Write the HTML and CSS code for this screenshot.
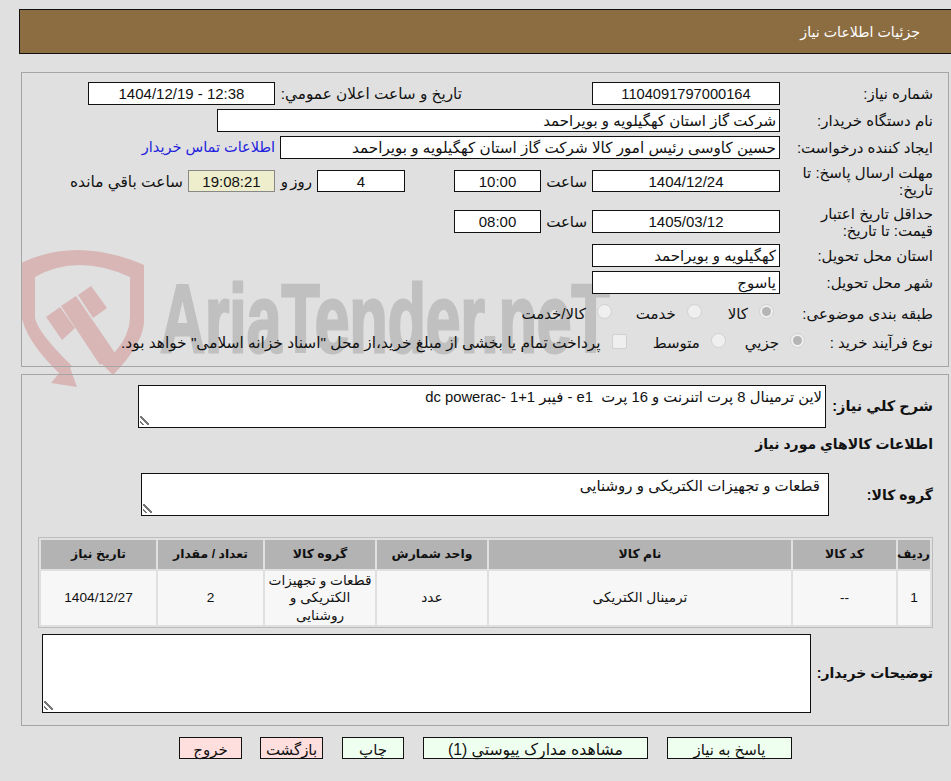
FILE: index.html
```html
<!DOCTYPE html>
<html lang="fa" dir="rtl">
<head>
<meta charset="utf-8">
<title>جزئیات اطلاعات نیاز</title>
<link rel="stylesheet" href="styles.css">
</head>
<body>
<header class="page-title">جزئیات اطلاعات نیاز</header>

<svg class="wm-shield" viewBox="0 240 160 160" aria-hidden="true">
  <path class="wm-f" d="M21 263 Q77 236 144 265 V323 Q142 345 113 375 L100 362 L115 352 Q130 335 130 317 V277 Q77 253 35 277 V318 Q38 333 72 366 L62 376 Q24 340 21 313 Z"/>
  <path class="wm-f" d="M51 383 L68 362 L77 387 Z"/>
  <path class="wm-f" d="M46 317 L60 307 L75 328 L62 340 Z"/>
  <path class="wm-f" d="M61 306 L76 296 L115 353 L100 365 Z"/>
  <path class="wm-f" d="M78 295 L91 286 L107 308 L93 318 Z"/>
</svg>
<div class="wm-text" aria-hidden="true">AriaTender.neT</div>

<main>
<section class="panel top-panel">
  <div class="row r1">
    <label class="lbl">شماره نیاز:</label>
    <output class="box c w188 id">1104091797000164</output>
    <label class="lbl2">تاریخ و ساعت اعلان عمومي:</label>
    <output class="box c w187" dir="ltr">1404/12/19 - 12:38</output>
  </div>
  <div class="row r1">
    <label class="lbl">نام دستگاه خریدار:</label>
    <output class="box w563">شرکت گاز استان کهگیلویه و بویراحمد</output>
  </div>
  <div class="row r1">
    <label class="lbl">ایجاد کننده درخواست:</label>
    <output class="box w500">حسین کاوسی رئیس امور کالا شرکت گاز استان کهگیلویه و بویراحمد</output>
    <a class="contact" href="#">اطلاعات تماس خریدار</a>
  </div>
  <div class="row r2">
    <label class="lbl tall">مهلت ارسال پاسخ: تا تاریخ:</label>
    <output class="box c w188 h22">1404/12/24</output>
    <span class="sa">ساعت</span>
    <output class="box c w87 h22">10:00</output>
    <output class="box c w88 h22 days">4</output>
    <span class="roz">روز و</span>
    <output class="box c timer">19:08:21</output>
    <span class="remain">ساعت باقي مانده</span>
  </div>
  <div class="row r3">
    <label class="lbl tall">حداقل تاریخ اعتبار قیمت: تا تاریخ:</label>
    <output class="box c w188">1405/03/12</output>
    <span class="sa">ساعت</span>
    <output class="box c w87">08:00</output>
  </div>
  <div class="row r1">
    <label class="lbl">استان محل تحویل:</label>
    <output class="box w188">کهگیلویه و بویراحمد</output>
  </div>
  <div class="row r1">
    <label class="lbl">شهر محل تحویل:</label>
    <output class="box w188">یاسوج</output>
  </div>
  <div class="row r4 first-choice">
    <label class="lbl">طبقه بندی موضوعی:</label>
    <span class="opts kinds">
      <span class="radio on"></span><span class="opt k1">کالا</span>
      <span class="radio"></span><span class="opt k2">خدمت</span>
      <span class="radio"></span><span class="opt">کالا/خدمت</span>
    </span>
  </div>
  <div class="row r4">
    <label class="lbl">نوع فرآیند خرید :</label>
    <span class="opts proc">
      <span class="radio on"></span><span class="opt p1">جزیي</span>
      <span class="radio"></span><span class="opt p2">متوسط</span>
      <span class="check"></span><span class="opt long">پرداخت تمام یا بخشی از مبلغ خرید،از محل "اسناد خزانه اسلامی" خواهد بود.</span>
    </span>
  </div>
</section>

<section class="panel bottom-panel">
  <div class="desc-row">
    <label class="blbl dl">شرح كلي نياز:</label>
    <div class="area a1">لاین ترمینال 8 پرت اتنرنت و 16 پرت&nbsp; e1 - فیبر 1+1 -dc powerac<i class="grip"></i></div>
  </div>
  <h2 class="sub">اطلاعات كالاهاي مورد نياز</h2>
  <div class="desc-row">
    <label class="blbl gl">گروه کالا:</label>
    <div class="area a2">قطعات و تجهیزات الکتریکی و روشنایی<i class="grip"></i></div>
  </div>
  <table class="items">
    <thead>
      <tr><th class="c1">ردیف</th><th class="c2">کد کالا</th><th class="c3">نام کالا</th><th class="c4">واحد شمارش</th><th class="c5">گروه کالا</th><th class="c6">تعداد / مقدار</th><th class="c7">تاریخ نیاز</th></tr>
    </thead>
    <tbody>
      <tr><td>1</td><td>--</td><td>ترمینال الکتریکی</td><td>عدد</td><td>قطعات و تجهیزات<br>الکتریکی و<br>روشنایی</td><td>2</td><td>1404/12/27</td></tr>
    </tbody>
  </table>
  <div class="notes-row">
    <label class="blbl nl">توضیحات خریدار:</label>
    <div class="area a3"><i class="grip"></i></div>
  </div>
</section>

<nav class="actions">
  <button class="btn ok b1">پاسخ به نیاز</button>
  <button class="btn ok b2">مشاهده مدارک پیوستي (1)</button>
  <button class="btn ok b3">چاپ</button>
  <button class="btn no b4">بازگشت</button>
  <button class="btn no b5">خروج</button>
</nav>
</main>
</body>
</html>
```
FILE: styles.css
```css
* { box-sizing: border-box; }
html, body { margin: 0; height: 781px; overflow: hidden; }
body {
  background: #e0e0e0;
  color: #111;
  font: 15px/17px "Liberation Sans", "DejaVu Sans", sans-serif;
  position: relative;
}
.page-title {
  margin: 9px 0 0 19px;
  height: 45px;
  background: #8c6d42;
  border: 1px solid #111;
  border-right: 0;
  color: #fff;
  padding: 14px 31px 0 0;
  font-size: 14.2px;
}
main { position: relative; }
.panel { border: 1px solid #a5a5a5; margin-left: 21px; margin-right: 2px; position: relative; }
.top-panel { margin-top: 18px; height: 295px; padding-top: 9px; }
.bottom-panel { margin-top: 7px; height: 352px; padding-top: 10px; }
.row { display: flex; align-items: center; padding-right: 15px; }
.r1 { height: 23px; margin-bottom: 4px; }
.r2 { height: 22px; margin: 11px 0 0; }
.r3 { height: 23px; margin: 18px 0 11px; }
.r4 { height: 25px; margin-bottom: 4px; }
.first-choice { margin-top: 7px; }
.lbl { width: 153px; flex: none; }
.tall { line-height: 17px; }
.box {
  display: block; flex: none; height: 23px; background: #fff;
  border: 1px solid #111; padding: 0 3px; line-height: 22px; white-space: nowrap; overflow: hidden;
}
.h22 { height: 22px; line-height: 21px; }
.c { text-align: center; }
.id { font-size: 14.67px; }
.w188 { width: 188px; }
.w187 { width: 187px; }
.w563 { width: 563px; }
.w500 { width: 500px; font-size: 15.2px; }
.w87 { width: 87px; }
.w88 { width: 88px; }
.lbl2 { margin-right: 130px; margin-left: 5px; flex: none; width: 182px; white-space: nowrap; font-size: 15.3px; }
.contact { color: #2222dd; text-decoration: none; margin-right: 5px; white-space: nowrap; font-size: 14.5px; }
.sa { width: 51px; padding-right: 5px; flex: none; }
.days { margin-right: 49px; }
.roz { width: 42px; flex: none; padding-right: 5px; white-space: nowrap; word-spacing: -2px; }
.timer { width: 87px; height: 22px; background: #eeeecc; border-color: #888; line-height: 21px; }
.remain { margin-right: 5px; white-space: nowrap; font-size: 15.4px; }
.opts { display: flex; align-items: center; }
.radio, .check { flex: none; background: #efefef; border: 1px solid #d0d0d0; }
.radio { width: 15px; height: 15px; border-radius: 50%; margin-top: -4px; position: relative; }
.radio.on::after { content: ""; position: absolute; inset: 2px; border-radius: 50%; background: #b5b5b5; }
.check { width: 15px; height: 15px; border-radius: 2px; margin-top: -3px; }
.opt { margin-right: 11px; white-space: nowrap; }
.long { font-size: 15.4px; }
.kinds { margin-right: 6px; }
.proc { margin-right: -25px; }
.k1 { margin-left: 26px; }
.k2 { margin-left: 24px; }
.p1 { margin-left: 19px; }
.p2 { margin-left: 26px; }
.desc-row { display: flex; padding-right: 15px; }
.blbl { font-weight: bold; font-size: 14px; flex: none; white-space: nowrap; }
.dl { width: 107px; padding-top: 13px; font-size: 14.5px; }
.gl { width: 104px; padding-top: 14px; }
.area { background: #fff; border: 1px solid #111; position: relative; padding: 3px; white-space: nowrap; }
.a1 { width: 688px; height: 43px; font-size: 14.8px; }
.a2 { width: 688px; height: 43px; padding-right: 8px; }
.grip {
  position: absolute; left: 1px; bottom: 2px; width: 9px; height: 9px;
  background: linear-gradient(45deg, transparent 12%, #777 12%, #777 24%, transparent 24%, transparent 42%, #777 42%, #777 58%, transparent 58%);
}
.sub { font-size: 14px; font-weight: bold; margin: 8px 15px 0 0; height: 37px; line-height: 17px; }
.items {
  width: 895px; margin: 21px 15px 0 0; border: 1px solid #bcbcbc; border-collapse: separate;
  border-spacing: 2px; table-layout: fixed; font-size: 13.7px;
}
.items th { background: #b3b3b3; height: 29px; font-size: 12.4px; padding: 0; font-weight: bold; }
.items td { background: #f7f7f7; height: 54px; text-align: center; padding: 0; line-height: 17.6px; white-space: nowrap; }
.c1 { width: 32px; } .c2 { width: 103px; } .c3 { width: 302px; } .c4 { width: 110px; }
.c5 { width: 110px; } .c6 { width: 105px; } .c7 { width: 115px; }
.notes-row { display: flex; margin-top: 6px; padding-right: 15px; }
.nl { width: 122px; padding-top: 31px; }
.a3 { width: 769px; height: 79px; }
.actions { display: flex; gap: 19px; padding-right: 159px; margin-top: 11px; }
.btn {
  height: 22px; padding: 2px 0 0; border: 1px solid #111; font: 15px/17px "Liberation Sans", "DejaVu Sans", sans-serif; color: #111; flex: none;
}
.ok { background: #efffef; }
.no { background: #ffdede; }
.b1 { width: 125px; } .b2 { width: 225px; font-size: 15.7px; } .b3 { width: 62px; } .b4 { width: 63px; } .b5 { width: 63px; margin-right: -1px; }
.wm-shield { position: absolute; left: 0; top: 240px; width: 160px; height: 160px; }
.wm-f { fill: #d8b6b6; }
.wm-text {
  position: absolute; left: 160px; top: 274px; direction: ltr; color: #c0c0c0;
  -webkit-text-stroke: 3px #c0c0c0;
  font: bold 96px/90px "Liberation Sans", sans-serif; white-space: nowrap; transform-origin: left top; transform: scaleX(0.65);
}
```
